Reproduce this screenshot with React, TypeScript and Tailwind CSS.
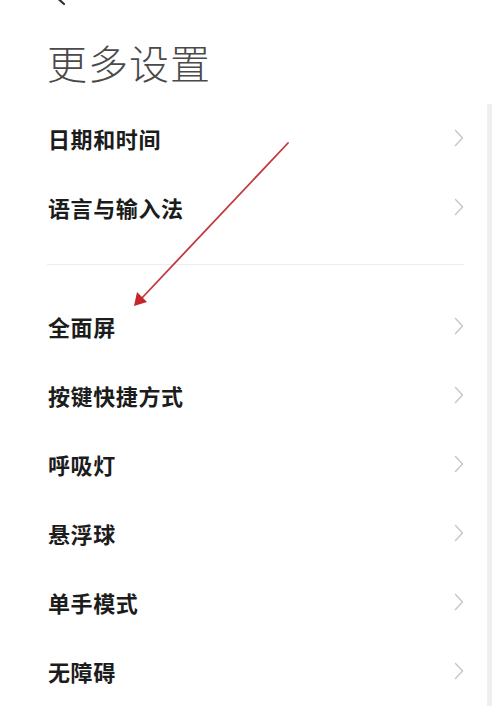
import React from "react";

const groupOne = ["日期和时间", "语言与输入法"];
const groupTwo = ["全面屏", "按键快捷方式", "呼吸灯", "悬浮球", "单手模式", "无障碍"];

function Chevron() {
  return (
    <svg width="10" height="18" viewBox="0 0 10 18" fill="none">
      <path d="M1.5 1.5L8.5 9L1.5 16.5" stroke="#c4c4c4" strokeWidth="1.3" strokeLinecap="round" strokeLinejoin="round" />
    </svg>
  );
}

function Row({ label }: { label: string }) {
  return (
    <div className="flex h-[69px] items-center justify-between pl-[48px] pr-[36px]">
      <span className="text-[22px] font-bold leading-none tracking-[0.6px] text-[#1c1c1c]">{label}</span>
      <Chevron />
    </div>
  );
}

export default function App() {
  return (
    <div
      className="relative h-[706px] w-[500px] overflow-hidden bg-white"
      style={{ fontFamily: '"Noto Sans CJK SC", "Noto Sans", sans-serif' }}
    >
      {/* back button, cut off by the top edge */}
      <svg className="absolute left-[50px] top-[-16px]" width="20" height="24" viewBox="0 0 20 24" fill="none">
        <path d="M14 2L4 11L14 20" stroke="#333" strokeWidth="2.2" strokeLinecap="round" strokeLinejoin="round" />
      </svg>

      <h1 className="pl-[47px] pt-[40px] text-[40px] font-light leading-[44px] tracking-[1px] text-[#4a4a4a]">更多设置</h1>

      <div className="mt-[19px]">
        {groupOne.map((label) => (
          <Row key={label} label={label} />
        ))}
        <div className="mb-[26px] ml-[47px] mr-[36px] mt-[23px] h-px bg-[#ececec]" />
        {groupTwo.map((label) => (
          <Row key={label} label={label} />
        ))}
      </div>

      {/* scrollbar track */}
      <div className="absolute bottom-0 left-[487px] top-[104px] w-[5px] bg-[#efefef]" />

      {/* red annotation arrow */}
      <svg className="pointer-events-none absolute left-0 top-0" width="500" height="706" viewBox="0 0 500 706">
        <line x1="288" y1="143" x2="141" y2="299" stroke="#c23a3e" strokeWidth="1.8" strokeLinecap="round" />
        <polygon points="134,306 137,292 147,302" fill="#c4262d" />
      </svg>
    </div>
  );
}
